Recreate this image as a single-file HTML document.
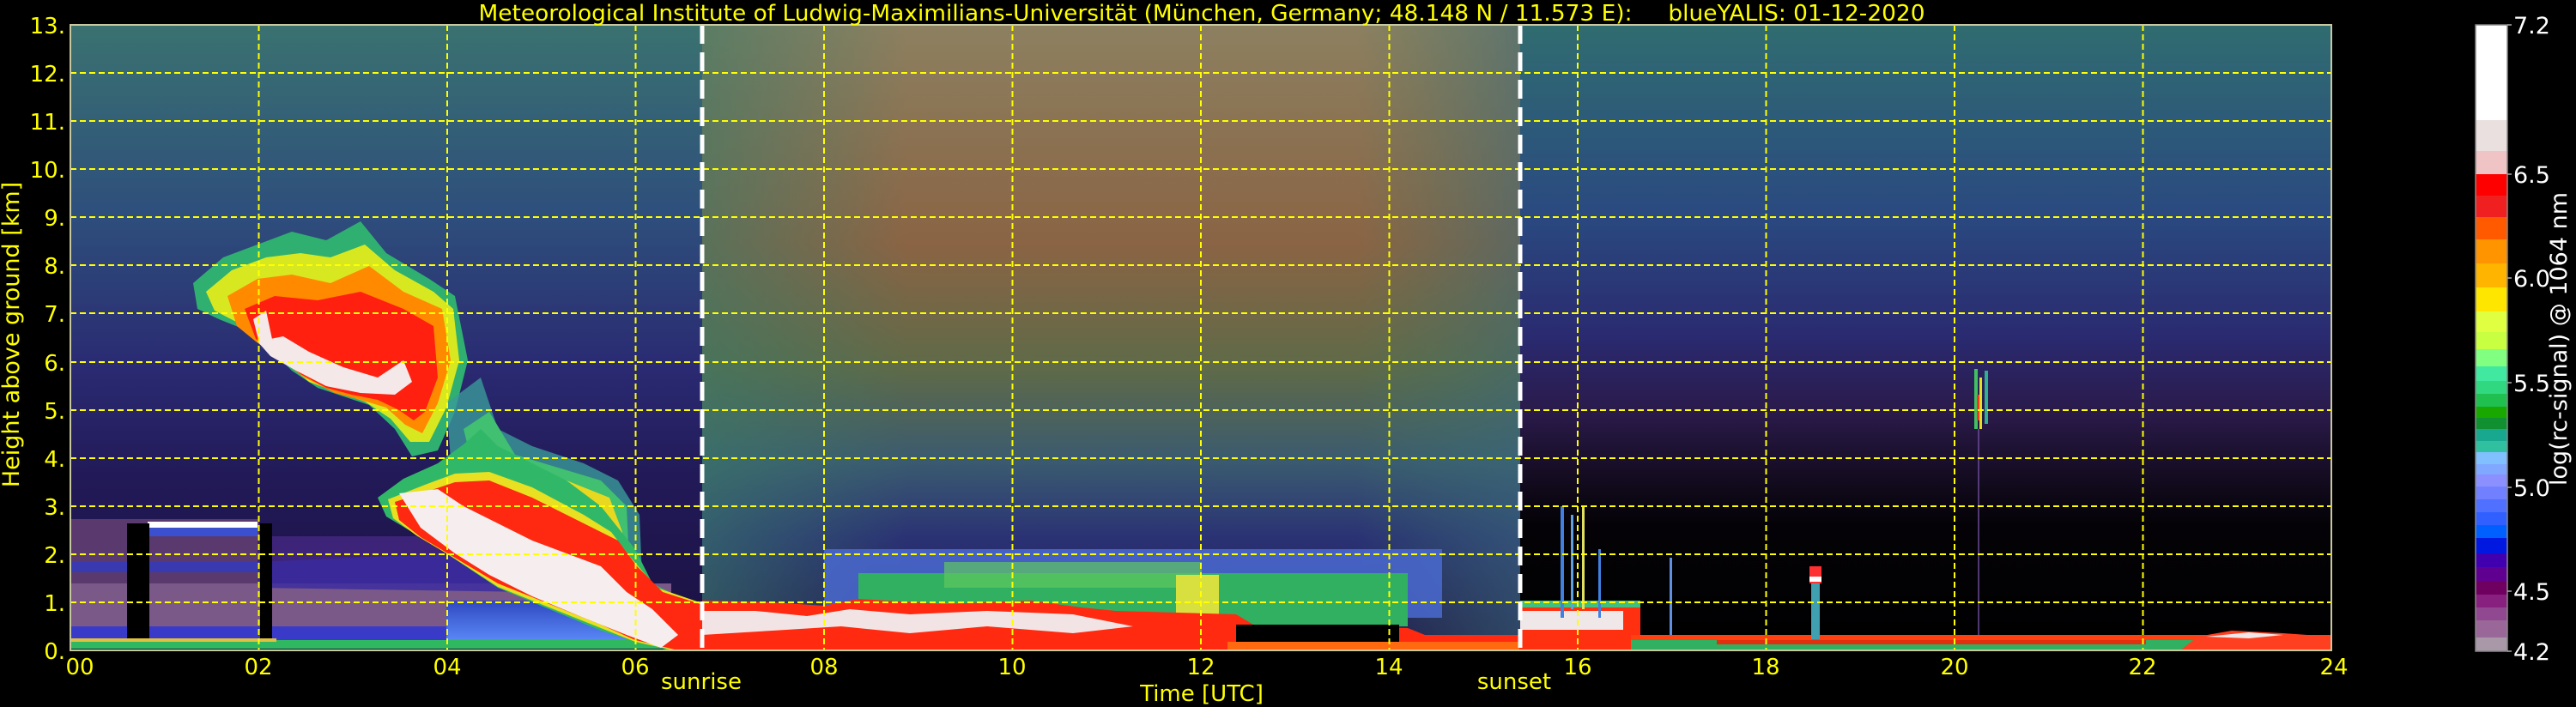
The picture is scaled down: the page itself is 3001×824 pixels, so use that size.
<!DOCTYPE html>
<html><head><meta charset="utf-8"><style>
html,body{margin:0;padding:0;background:#000;width:3001px;height:824px;overflow:hidden}
svg{display:block}
text{font-family:"DejaVu Sans","Liberation Sans",sans-serif}
</style></head><body>
<svg width="3001" height="824" viewBox="0 0 3001 824" xmlns="http://www.w3.org/2000/svg">
<defs>
<linearGradient id="gL" x1="0" y1="0" x2="0" y2="1">
<stop offset="0" stop-color="#3a7270"/><stop offset="0.3" stop-color="#2e4f7c"/><stop offset="0.55" stop-color="#2a2a72"/><stop offset="0.72" stop-color="#221a58"/><stop offset="1" stop-color="#1a1040"/></linearGradient>
<linearGradient id="gD" x1="0" y1="0" x2="0" y2="1">
<stop offset="0" stop-color="#8c8060"/><stop offset="0.35" stop-color="#8a6444"/><stop offset="0.55" stop-color="#5e6a48"/><stop offset="0.7" stop-color="#3a5a70"/><stop offset="0.82" stop-color="#2a3274"/><stop offset="1" stop-color="#201848"/></linearGradient>
<linearGradient id="gDh" x1="0" y1="0" x2="1" y2="0">
<stop offset="0" stop-color="#3a7a68" stop-opacity="0.6"/><stop offset="0.25" stop-color="#3a7a68" stop-opacity="0"/><stop offset="0.8" stop-color="#3a7a68" stop-opacity="0"/><stop offset="1" stop-color="#3a6a78" stop-opacity="0.55"/></linearGradient>
<linearGradient id="gR" x1="0" y1="0" x2="0" y2="1">
<stop offset="0" stop-color="#306c70"/><stop offset="0.3" stop-color="#2a4a80"/><stop offset="0.5" stop-color="#2a2a70"/><stop offset="0.62" stop-color="#2a1a4a"/><stop offset="0.72" stop-color="#150c22"/><stop offset="0.8" stop-color="#040206"/><stop offset="1" stop-color="#000"/></linearGradient>
<linearGradient id="gBlue" x1="0" y1="0" x2="0" y2="1">
<stop offset="0" stop-color="#3048c0"/><stop offset="1" stop-color="#5a8af8"/></linearGradient>
<clipPath id="cp"><rect x="82" y="29" width="2634" height="729"/></clipPath>
</defs>
<rect width="3001" height="824" fill="#000"/>
<g clip-path="url(#cp)">
<rect x="82" y="29" width="736" height="729" fill="url(#gL)"/>
<rect x="818" y="29" width="953" height="729" fill="url(#gD)"/>
<rect x="818" y="29" width="953" height="729" fill="url(#gDh)"/>
<rect x="1771" y="29" width="945" height="729" fill="url(#gR)"/>

<!-- left lower aerosol -->
<rect x="82" y="605" width="220" height="145" fill="#5a3a6e"/>
<rect x="300" y="625" width="300" height="125" fill="#3e2478"/>
<rect x="82" y="680" width="700" height="52" fill="#7a5888"/>
<rect x="82" y="655" width="220" height="12" fill="#3a3ab0"/>
<polygon points="300,655 520,645 620,660 620,690 300,685" fill="#3a2aa0" opacity="0.8"/>
<rect x="82" y="730" width="700" height="18" fill="#3a3ac8"/>
<rect x="520" y="700" width="240" height="48" fill="url(#gBlue)"/>
<rect x="172" y="608" width="128" height="7" fill="#ffffff"/>
<rect x="172" y="615" width="128" height="10" fill="#3a50d0"/>
<rect x="148" y="610" width="26" height="138" fill="#000"/>
<rect x="303" y="610" width="14" height="138" fill="#000"/>
<rect x="82" y="746" width="740" height="10" fill="#30b860"/>
<rect x="82" y="744" width="240" height="4" fill="#e0c040"/>

<!-- upper cloud -->
<polygon points="225,330 260,300 300,285 340,270 380,280 420,258 450,295 500,325 530,345 545,420 530,480 510,525 480,532 460,500 430,472 400,462 370,452 340,432 310,402 280,382 255,372 230,360" fill="#30b070"/>
<polygon points="240,340 270,315 310,300 350,295 385,300 425,285 460,315 505,340 528,360 535,420 520,475 500,515 478,515 455,488 425,468 395,458 360,445 330,420 300,395 275,375 250,362" fill="#d8e820"/>
<polygon points="265,345 300,325 340,320 385,330 430,310 470,340 515,360 525,420 510,470 492,505 472,495 450,475 420,466 390,458 355,440 325,418 298,398 276,380" fill="#ff8a00"/>
<polygon points="285,360 320,345 370,350 420,340 470,360 505,380 510,440 495,480 482,490 465,478 440,466 410,460 380,452 350,436 322,414 298,395" fill="#ff2010"/>
<polygon points="300,398 330,392 360,410 400,428 440,440 470,420 480,445 460,460 420,458 380,450 345,432 315,415" fill="#f4e8e8"/>
<polygon points="295,372 310,362 318,400 302,400" fill="#f4e8e8"/>

<!-- 04-06 streaky plume -->
<polygon points="520,470 560,440 580,500 620,520 680,540 720,560 745,600 750,720 700,700 640,680 580,650 530,600" fill="#3a9a9a" opacity="0.8"/>
<polygon points="540,500 570,480 600,530 650,545 700,560 730,590 735,700 690,690 630,660 570,620" fill="#40c070"/>
<polygon points="560,540 600,545 660,560 710,580 725,620 725,690 680,680 620,650" fill="#e8d820"/>
<polygon points="580,580 640,590 700,600 720,640 715,690 670,675 620,650" fill="#ff7010"/>

<!-- lower plume -->
<polygon points="440,580 470,558 510,540 540,518 560,500 580,520 610,535 660,560 700,590 740,640 760,680 800,700 835,708 835,758 780,758 740,748 700,735 640,710 580,685 520,645 480,620 450,602" fill="#30b868"/>
<polygon points="452,582 495,565 530,552 570,550 620,568 680,600 712,620 735,650 765,685 815,702 835,712 835,758 785,758 740,748 700,732 640,708 580,684 525,648 485,624 458,604" fill="#e8e020"/>
<polygon points="460,585 500,572 530,562 570,560 620,580 680,610 720,630 742,660 772,690 822,706 835,758 790,758 740,746 700,728 640,704 580,680 530,650 490,626 465,606" fill="#ff2810"/>
<polygon points="465,575 510,570 540,590 580,610 620,630 660,645 700,660 730,690 760,710 790,740 770,755 730,740 680,720 620,695 570,670 530,645 490,615" fill="#f6eeee"/>

<!-- day boundary layer -->
<rect x="960" y="640" width="720" height="80" fill="#4a6ad0" opacity="0.85"/>
<rect x="1000" y="668" width="640" height="62" fill="#30b060"/>
<rect x="1100" y="655" width="300" height="30" fill="#60c860" opacity="0.7"/>
<rect x="1370" y="670" width="50" height="50" fill="#d8e040"/>
<polygon points="818,700 900,702 960,706 1000,698 1100,704 1200,700 1260,708 1300,712 1440,716 1460,728 1640,732 1660,740 1771,740 1771,758 818,758" fill="#ff2a10"/>
<polygon points="818,712 880,712 940,718 990,710 1060,716 1150,712 1250,716 1320,730 1250,738 1150,730 1060,738 980,730 900,735 818,740" fill="#f2e4e4"/>
<rect x="1440" y="728" width="190" height="20" fill="#000"/>
<rect x="1430" y="748" width="340" height="10" fill="#ff6a10"/>
<rect x="1771" y="704" width="140" height="54" fill="#ff3010"/>
<rect x="1771" y="712" width="120" height="22" fill="#f0e8e8"/>
<rect x="1771" y="700" width="140" height="8" fill="#40c080"/>
<rect x="1818" y="590" width="4" height="130" fill="#4080e0"/>
<rect x="1830" y="600" width="3" height="110" fill="#60a0e0"/>
<rect x="1843" y="590" width="3" height="120" fill="#e0e060"/>
<rect x="1862" y="640" width="3" height="80" fill="#4080e0"/>
<rect x="1945" y="650" width="3" height="90" fill="#6090e0"/>
<rect x="1900" y="742" width="816" height="16" fill="#30b060"/>
<rect x="1900" y="740" width="816" height="6" fill="#ff4010"/>
<rect x="2000" y="746" width="500" height="5" fill="#e03010"/>
<polygon points="2540,758 2560,742 2600,735 2660,738 2716,742 2716,758" fill="#ff4020"/>
<polygon points="2570,742 2620,737 2660,740 2620,744" fill="#f0e8e8"/>
<rect x="2110" y="665" width="10" height="80" fill="#40a0b0"/>
<rect x="2108" y="660" width="14" height="20" fill="#ff3030"/>
<rect x="2108" y="672" width="14" height="6" fill="#ffffff"/>
<rect x="2300" y="430" width="4" height="70" fill="#40c060"/>
<rect x="2306" y="440" width="3" height="60" fill="#e0e020"/>
<rect x="2312" y="432" width="4" height="62" fill="#30b090"/>
<rect x="2303" y="460" width="3" height="30" fill="#ff3020"/>
<rect x="2304" y="500" width="2" height="240" fill="#7050a0" opacity="0.7"/>
</g>

<!-- grid -->
<g stroke="#ffff00" stroke-width="2" stroke-dasharray="7,4" fill="none">
<line x1="301.5" y1="29" x2="301.5" y2="758"/><line x1="521" y1="29" x2="521" y2="758"/><line x1="740.5" y1="29" x2="740.5" y2="758"/>
<line x1="960" y1="29" x2="960" y2="758"/><line x1="1179.5" y1="29" x2="1179.5" y2="758"/><line x1="1399" y1="29" x2="1399" y2="758"/>
<line x1="1618.5" y1="29" x2="1618.5" y2="758"/><line x1="1838" y1="29" x2="1838" y2="758"/><line x1="2057.5" y1="29" x2="2057.5" y2="758"/>
<line x1="2277" y1="29" x2="2277" y2="758"/><line x1="2496.5" y1="29" x2="2496.5" y2="758"/>
<line x1="82" y1="702" x2="2716" y2="702"/><line x1="82" y1="646" x2="2716" y2="646"/><line x1="82" y1="590" x2="2716" y2="590"/>
<line x1="82" y1="534" x2="2716" y2="534"/><line x1="82" y1="478" x2="2716" y2="478"/><line x1="82" y1="422" x2="2716" y2="422"/>
<line x1="82" y1="365" x2="2716" y2="365"/><line x1="82" y1="309" x2="2716" y2="309"/><line x1="82" y1="253" x2="2716" y2="253"/>
<line x1="82" y1="197" x2="2716" y2="197"/><line x1="82" y1="141" x2="2716" y2="141"/><line x1="82" y1="85" x2="2716" y2="85"/>
</g>
<g stroke="#ffffff" stroke-width="5" stroke-dasharray="22,10">
<line x1="818" y1="29" x2="818" y2="758"/><line x1="1771" y1="29" x2="1771" y2="758"/>
</g>
<rect x="82" y="29" width="2634" height="729" fill="none" stroke="#c8c8a0" stroke-width="2"/>

<!-- title -->
<text x="1400" y="24" fill="#ffff00" font-size="26" text-anchor="middle" textLength="1685" lengthAdjust="spacingAndGlyphs" xml:space="preserve">Meteorological Institute of Ludwig-Maximilians-Universität (München, Germany; 48.148 N / 11.573 E):     blueYALIS: 01-12-2020</text>

<!-- y labels -->
<g fill="#ffff00" font-size="26" text-anchor="end">
<text x="76" y="39">13.</text><text x="76" y="95">12.</text><text x="76" y="151">11.</text><text x="76" y="207">10.</text>
<text x="76" y="263">9.</text><text x="76" y="319">8.</text><text x="76" y="375">7.</text><text x="76" y="432">6.</text>
<text x="76" y="488">5.</text><text x="76" y="544">4.</text><text x="76" y="600">3.</text><text x="76" y="656">2.</text>
<text x="76" y="712">1.</text><text x="76" y="768">0.</text>
</g>
<text transform="translate(22,390) rotate(-90)" fill="#ffff00" font-size="27" text-anchor="middle">Height above ground [km]</text>

<!-- x labels -->
<g fill="#ffff00" font-size="26" text-anchor="middle">
<text x="93" y="786">00</text><text x="301" y="786">02</text><text x="521" y="786">04</text><text x="740" y="786">06</text>
<text x="960" y="786">08</text><text x="1179" y="786">10</text><text x="1399" y="786">12</text><text x="1618" y="786">14</text>
<text x="1838" y="786">16</text><text x="2057" y="786">18</text><text x="2277" y="786">20</text><text x="2496" y="786">22</text><text x="2719" y="786">24</text>
<text x="817" y="803">sunrise</text><text x="1764" y="803">sunset</text>
<text x="1400" y="817">Time [UTC]</text>
</g>

<!-- colorbar -->
<g>
<rect x="2884" y="29" width="37" height="111" fill="#ffffff"/>
<rect x="2884" y="140" width="37" height="36" fill="#ebe0e0"/>
<rect x="2884" y="176" width="37" height="27" fill="#f0c4c4"/>
<rect x="2884" y="203" width="37" height="25" fill="#ff0000"/>
<rect x="2884" y="228" width="37" height="25" fill="#f02020"/>
<rect x="2884" y="253" width="37" height="26" fill="#ff5a00"/>
<rect x="2884" y="279" width="37" height="28" fill="#ff9400"/>
<rect x="2884" y="307" width="37" height="28" fill="#ffb400"/>
<rect x="2884" y="335" width="37" height="28" fill="#ffe600"/>
<rect x="2884" y="363" width="37" height="24" fill="#e0ff40"/>
<rect x="2884" y="387" width="37" height="20" fill="#c8ff40"/>
<rect x="2884" y="407" width="37" height="20" fill="#80ff80"/>
<rect x="2884" y="427" width="37" height="17" fill="#40e8a0"/>
<rect x="2884" y="444" width="37" height="15" fill="#30d880"/>
<rect x="2884" y="459" width="37" height="15" fill="#20c050"/>
<rect x="2884" y="474" width="37" height="13" fill="#18a800"/>
<rect x="2884" y="487" width="37" height="13" fill="#109030"/>
<rect x="2884" y="500" width="37" height="14" fill="#18a890"/>
<rect x="2884" y="514" width="37" height="13" fill="#30c0a0"/>
<rect x="2884" y="527" width="37" height="14" fill="#80c0ff"/>
<rect x="2884" y="541" width="37" height="12" fill="#80a8ff"/>
<rect x="2884" y="553" width="37" height="14" fill="#8c90ff"/>
<rect x="2884" y="567" width="37" height="15" fill="#7080ff"/>
<rect x="2884" y="582" width="37" height="15" fill="#5070ff"/>
<rect x="2884" y="597" width="37" height="15" fill="#3060ff"/>
<rect x="2884" y="612" width="37" height="15" fill="#0060ff"/>
<rect x="2884" y="627" width="37" height="18" fill="#0018e0"/>
<rect x="2884" y="645" width="37" height="16" fill="#4000b0"/>
<rect x="2884" y="661" width="37" height="16" fill="#600090"/>
<rect x="2884" y="677" width="37" height="16" fill="#700060"/>
<rect x="2884" y="693" width="37" height="15" fill="#882080"/>
<rect x="2884" y="708" width="37" height="15" fill="#904890"/>
<rect x="2884" y="723" width="37" height="20" fill="#9a6898"/>
<rect x="2884" y="743" width="37" height="16" fill="#a898a8"/>
<rect x="2884" y="29" width="37" height="730" fill="none" stroke="#888" stroke-width="1.5"/>
<g stroke="#aaa" stroke-width="1.5">
<line x1="2921" y1="29" x2="2926" y2="29"/><line x1="2921" y1="203" x2="2926" y2="203"/><line x1="2921" y1="324" x2="2926" y2="324"/>
<line x1="2921" y1="446" x2="2926" y2="446"/><line x1="2921" y1="568" x2="2926" y2="568"/><line x1="2921" y1="689" x2="2926" y2="689"/><line x1="2921" y1="759" x2="2926" y2="759"/>
</g>
<g fill="#ffffff" font-size="27">
<text x="2928" y="39">7.2</text><text x="2928" y="213">6.5</text><text x="2928" y="334">6.0</text>
<text x="2928" y="456">5.5</text><text x="2928" y="578">5.0</text><text x="2928" y="699">4.5</text><text x="2928" y="769">4.2</text>
</g>
<text transform="translate(2990,395) rotate(-90)" fill="#ffffff" font-size="27" text-anchor="middle">log(rc-signal) @ 1064 nm</text>
</g>
</svg>
</body></html>
